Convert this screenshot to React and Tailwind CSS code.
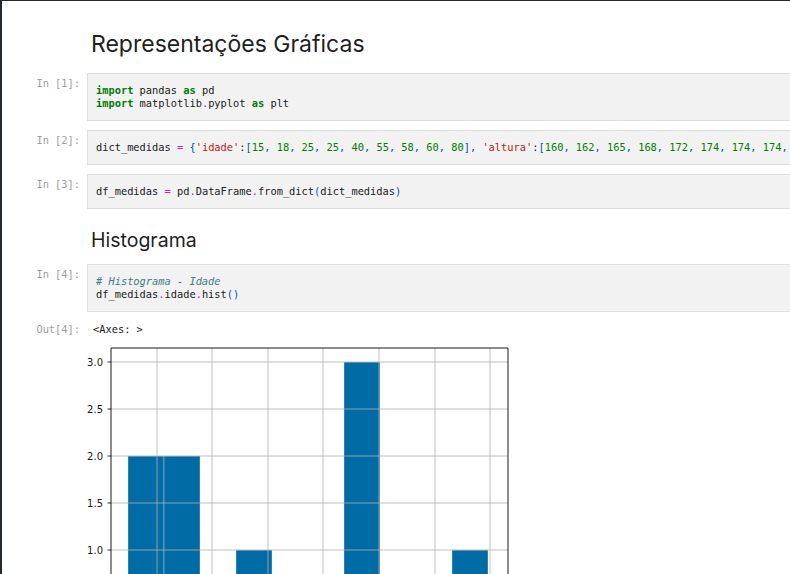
const mono = { fontFamily: '"DejaVu Sans Mono", monospace' };

function Prompt({ children }) {
  return (
    <div
      className="w-[85px] shrink-0 pr-[7px] pt-[4px] text-right text-[10.35px] leading-[13px] text-[#9e9e9e] whitespace-pre"
      style={mono}
    >
      {children}
    </div>
  );
}

function CodeCell({ n, lines, className = "" }) {
  return (
    <div className={"flex " + className}>
      <Prompt>{`In [${n}]:`}</Prompt>
      <div
        className="w-[760px] shrink-0 border border-[#dfdfdf] bg-[#f2f2f2] pl-[8px] pt-[10px] pb-[10px] text-[10.35px] leading-[13px] text-[#212121] whitespace-pre"
        style={mono}
      >
        {lines.map((l, i) => (
          <div key={i}>{l}</div>
        ))}
      </div>
    </div>
  );
}

const K = ({ children }) => <span className="font-bold text-[#008000]">{children}</span>;
const N = ({ children }) => <span className="text-[#008000]">{children}</span>;
const S = ({ children }) => <span className="text-[#ba2121]">{children}</span>;
const O = ({ children }) => <span className="text-[#aa22ff]">{children}</span>;
const P = ({ children }) => <span className="text-[#0055aa]">{children}</span>;

function numList(arr) {
  return arr.map((v, i) => (
    <span key={i}>
      <N>{v}</N>
      {i < arr.length - 1 ? <P>, </P> : null}
    </span>
  ));
}

function Histogram() {
  const bars = [
    [48, 84, 2],
    [84, 120, 2],
    [156, 192, 1],
    [264, 300, 3],
    [372, 408, 1],
  ];
  const y = (v) => 22 + (3 - v) * 94;
  const xs = [77, 132, 188, 243, 299, 355, 410];
  const ys = [3.0, 2.5, 2.0, 1.5, 1.0, 0.5];
  return (
    <svg width="440" height="240" viewBox="0 0 440 240" className="block">
      <rect x="31" y="8" width="397" height="300" fill="#fff" />
      {bars.map(([a, b, h], i) => (
        <rect key={i} x={a} y={y(h)} width={b - a} height={304 - y(h)} fill="#006ba4" stroke="#d6e6f2" strokeWidth="0.4" />
      ))}
      {xs.map((x) => (
        <line key={x} x1={x} y1="8" x2={x} y2="300" stroke="#b0b0b0" strokeWidth="0.8" />
      ))}
      {ys.map((v) => (
        <line key={v} x1="31" y1={y(v)} x2="428" y2={y(v)} stroke="#b0b0b0" strokeWidth="0.8" />
      ))}
      {ys.map((v) => (
        <g key={"t" + v}>
          <line x1="27.5" y1={y(v)} x2="31" y2={y(v)} stroke="#000" strokeWidth="0.8" />
          <text
            x="23"
            y={y(v) + 3.5}
            textAnchor="end"
            fontSize="10"
            fill="#1a1a1a"
            fontFamily='"DejaVu Sans", sans-serif'
          >
            {v.toFixed(1)}
          </text>
        </g>
      ))}
      <line x1="31" y1="8" x2="428" y2="8" stroke="#000" strokeWidth="0.9" />
      <line x1="31" y1="8" x2="31" y2="300" stroke="#000" strokeWidth="0.9" />
      <line x1="428" y1="8" x2="428" y2="300" stroke="#000" strokeWidth="0.9" />
    </svg>
  );
}

export default function App() {
  return (
    <div
      className="w-[790px] h-[574px] overflow-hidden bg-white border-l-2 border-t border-[#24292e]"
      style={{ fontFamily: 'Inter, "Noto Sans", sans-serif' }}
    >
      <h1 className="pl-[89px] pt-[28px] text-[23px] leading-[30px] font-normal text-[#1f1f1f]">
        Representações Gráficas
      </h1>

      <CodeCell
        n={1}
        className="mt-[14px]"
        lines={[
          <>
            <K>import</K> pandas <K>as</K> pd
          </>,
          <>
            <K>import</K> matplotlib<O>.</O>pyplot <K>as</K> plt
          </>,
        ]}
      />

      <CodeCell
        n={2}
        className="mt-[9px]"
        lines={[
          <>
            dict_medidas <O>=</O> <P>{"{"}</P>
            <S>'idade'</S>:<P>[</P>
            {numList([15, 18, 25, 25, 40, 55, 58, 60, 80])}
            <P>], </P>
            <S>'altura'</S>:<P>[</P>
            {numList([160, 162, 165, 168, 172, 174, 174, 174, 176, 180])}
            <P>]{"}"}</P>
          </>,
        ]}
      />

      <CodeCell
        n={3}
        className="mt-[9px]"
        lines={[
          <>
            df_medidas <O>=</O> pd<O>.</O>DataFrame<O>.</O>from_dict<P>(</P>dict_medidas<P>)</P>
          </>,
        ]}
      />

      <h2 className="pl-[89px] pt-[18px] text-[19.5px] leading-[26px] font-normal text-[#1f1f1f]">
        Histograma
      </h2>

      <CodeCell
        n={4}
        className="mt-[11px]"
        lines={[
          <span className="italic text-[#408080]"># Histograma - Idade</span>,
          <>
            df_medidas<O>.</O>idade<O>.</O>hist<P>()</P>
          </>,
        ]}
      />

      <div className="flex mt-[11px]">
        <div
          className="w-[85px] shrink-0 pr-[7px] text-right text-[10.35px] leading-[13px] text-[#9e9e9e] whitespace-pre"
          style={mono}
        >
          Out[4]:
        </div>
        <div className="pl-[6px] text-[10.35px] leading-[13px] text-[#212121] whitespace-pre" style={mono}>
          {"<Axes: >"}
        </div>
      </div>

      <div className="ml-[78px] mt-[4px]">
        <Histogram />
      </div>
    </div>
  );
}
